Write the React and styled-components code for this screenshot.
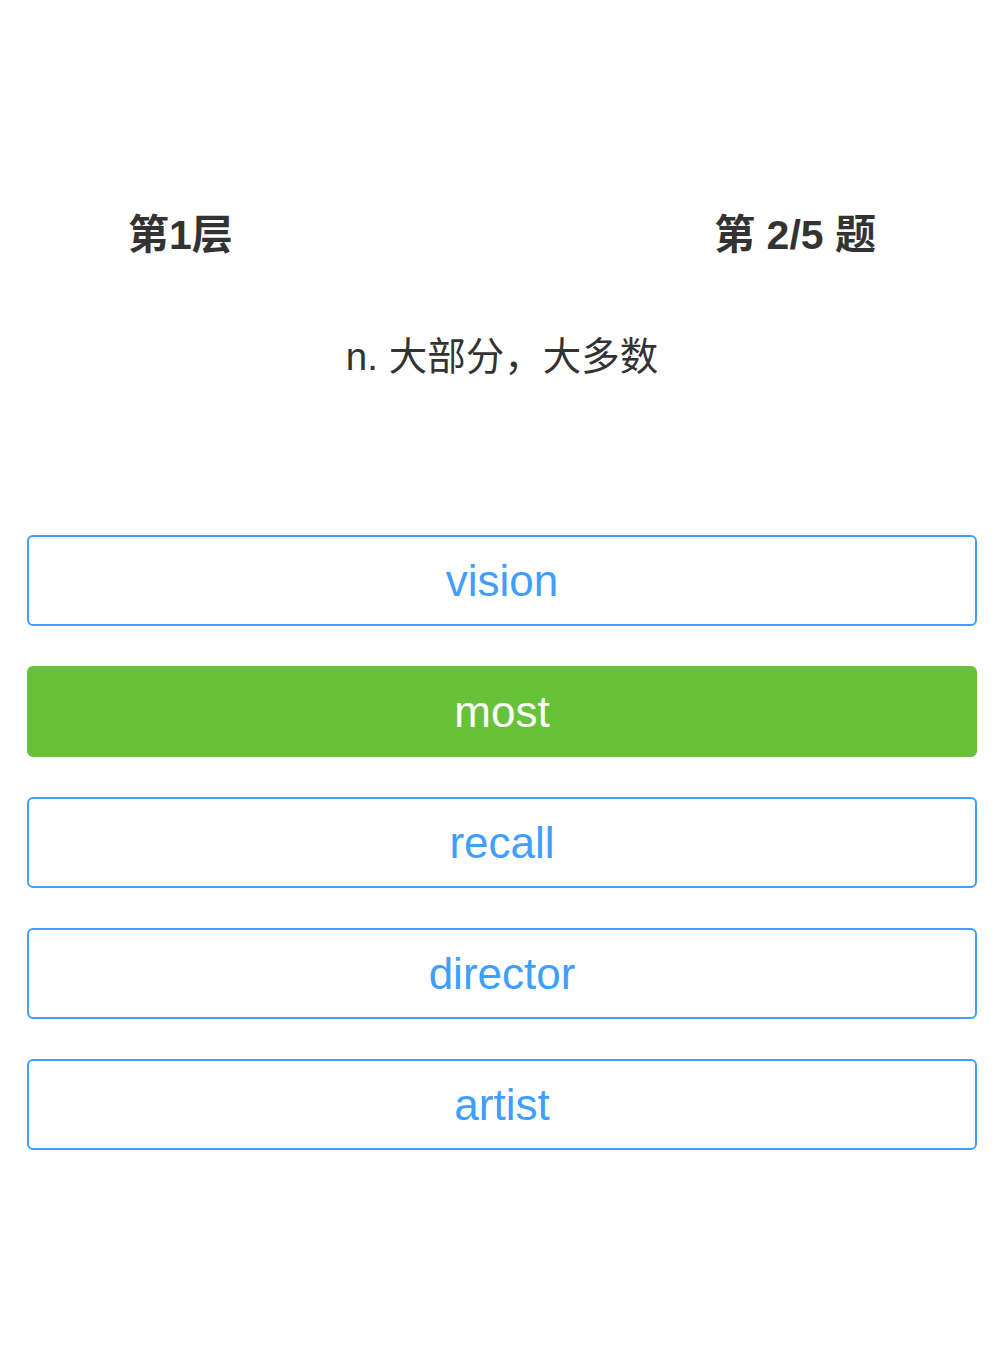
import React from "react";
import styled, { createGlobalStyle } from "styled-components";

const GlobalStyle = createGlobalStyle`
  body {
    margin: 0;
    background: #ffffff;
    font-family: "Liberation Sans", Arial, "Noto Sans CJK SC", sans-serif;
  }
`;

const Page = styled.div`
  padding-top: 205px;
`;

const Header = styled.div`
  display: flex;
  justify-content: space-between;
  padding: 0 128px;
  height: 60px;
  line-height: 60px;
  font-size: 41px;
  font-weight: 700;
  color: #333333;
`;

const Meaning = styled.div`
  margin-top: 62px;
  height: 60px;
  line-height: 60px;
  text-align: center;
  font-size: 38.5px;
  color: #333333;
`;

const Options = styled.div`
  margin-top: 148px;
  padding: 0 27px;
  display: flex;
  flex-direction: column;
  gap: 40px;
`;

const Option = styled.button`
  box-sizing: border-box;
  width: 100%;
  height: 91px;
  border: 2px solid ${(p) => (p.$correct ? "#67c23a" : "#409eff")};
  border-radius: 6px;
  background: ${(p) => (p.$correct ? "#67c23a" : "#ffffff")};
  color: ${(p) => (p.$correct ? "#ffffff" : "#409eff")};
  font-family: "Liberation Sans", Arial, sans-serif;
  font-size: 44px;
  padding: 0;
  cursor: pointer;
`;

const options = ["vision", "most", "recall", "director", "artist"];

export default function App() {
  return (
    <Page>
      <GlobalStyle />
      <Header>
        <span>第1层</span>
        <span>第 2/5 题</span>
      </Header>
      <Meaning>n. 大部分，大多数</Meaning>
      <Options>
        {options.map((word) => (
          <Option key={word} type="button" $correct={word === "most"}>
            {word}
          </Option>
        ))}
      </Options>
    </Page>
  );
}
